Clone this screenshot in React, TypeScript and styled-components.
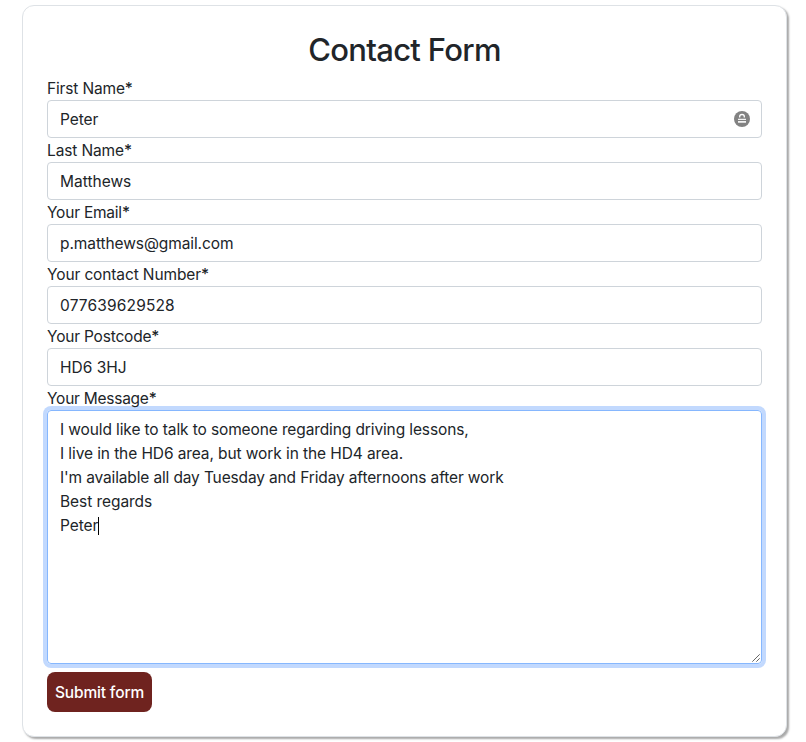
import React from 'react';
import styled, { createGlobalStyle } from 'styled-components';

const GlobalStyle = createGlobalStyle`
  *, *::before, *::after { box-sizing: border-box; }
  body {
    margin: 0;
    background: #fff;
    color: #212529;
    font-family: Inter, 'Liberation Sans', sans-serif;
    font-size: 15.5px;
    line-height: 24px;
  }
`;

const Page = styled.main`
  padding: 5px 18px 5px 22px;
`;

const Card = styled.form`
  display: flex;
  flex-direction: column;
  width: 765px;
  height: 732px;
  padding: 24px;
  border: 1px solid #dee2e6;
  border-radius: 12px;
  background: #fff;
  box-shadow: 2px 2px 2px rgba(0, 0, 0, 0.34);
`;

const Title = styled.h2`
  height: 46px;
  margin: 0;
  font-size: 31px;
  font-weight: 500;
  line-height: 40px;
  letter-spacing: -0.7px;
  text-align: center;
`;

const Label = styled.label<{ $spacing: number }>`
  position: relative;
  z-index: 1;
  display: block;
  height: 24px;
  line-height: 26px;
  letter-spacing: ${(p) => p.$spacing}px;
  white-space: nowrap;
`;

const Required = styled.span`
  font-weight: 500;
`;

const InputFrame = styled.div`
  display: flex;
  align-items: center;
  height: 38px;
  padding: 0 11px 0 12px;
  border: 1px solid #ced4da;
  border-radius: 4px;
`;

const Input = styled.input<{ $spacing: number }>`
  flex: 1;
  min-width: 0;
  height: 26px;
  padding: 1px 0 0;
  border: 0;
  outline: 0;
  background: transparent;
  color: inherit;
  font: inherit;
  letter-spacing: ${(p) => p.$spacing}px;
`;

const MessageBox = styled.div`
  position: relative;
  height: 254px;
  padding: 7px 12px;
  border: 1px solid #86b7fe;
  border-radius: 4px;
  box-shadow: 0 0 0 4px #c2d9fe;
`;

const MessageLine = styled.div<{ $spacing: number }>`
  display: flex;
  align-items: center;
  height: 24px;
  letter-spacing: ${(p) => p.$spacing}px;
  white-space: nowrap;
`;

const Caret = styled.span`
  width: 1px;
  height: 18px;
  background: #000;
`;

const ResizeGrip = styled.svg`
  position: absolute;
  right: 1px;
  bottom: 1px;
`;

const SubmitButton = styled.button`
  width: 105px;
  height: 40px;
  margin-top: 8px;
  padding: 2px 0 0;
  border: 0;
  border-radius: 8px;
  background: #6f231f;
  color: #fff;
  font: inherit;
  font-weight: 500;
  letter-spacing: -0.15px;
  white-space: nowrap;
`;

const LockBadge = () => (
  <svg width="16" height="16" viewBox="0 0 16 16" aria-hidden="true">
    <circle cx="8" cy="8" r="8" fill="#828282" />
    <path d="M5.7 6.6V5.6a2.3 2.1 0 0 1 4.6 0v1" fill="none" stroke="#fff" strokeWidth="1.3" />
    <path d="M4 7.8h8v1.3H4zM4 10h8v1.8H4z" fill="#fff" fillOpacity="0.9" />
  </svg>
);

const fields = [
  { id: 'first', label: 'First Name', ls: -0.15, value: 'Peter', vs: -0.07, lock: true },
  { id: 'last', label: 'Last Name', ls: -0.13, value: 'Matthews', vs: 0 },
  { id: 'email', label: 'Your Email', ls: -0.22, value: 'p.matthews@gmail.com', vs: -0.09 },
  { id: 'phone', label: 'Your contact Number', ls: -0.12, value: '077639629528', vs: 0.15 },
  { id: 'postcode', label: 'Your Postcode', ls: -0.2, value: 'HD6 3HJ', vs: 0 },
];

const message = [
  { text: 'I would like to talk to someone regarding driving lessons,', spacing: -0.116 },
  { text: 'I live in the HD6 area, but work in the HD4 area.', spacing: -0.096 },
  { text: "I'm available all day Tuesday and Friday afternoons after work", spacing: -0.142 },
  { text: 'Best regards', spacing: -0.06 },
  { text: 'Peter', spacing: -0.07 },
];

export default function App() {
  return (
    <>
      <GlobalStyle />
      <Page>
        <Card>
          <Title>Contact Form</Title>
          {fields.map((f) => (
            <React.Fragment key={f.id}>
              <Label htmlFor={f.id} $spacing={f.ls}>
                {f.label}
                <Required>*</Required>
              </Label>
              <InputFrame>
                <Input id={f.id} defaultValue={f.value} $spacing={f.vs} spellCheck={false} />
                {f.lock && <LockBadge />}
              </InputFrame>
            </React.Fragment>
          ))}
          <Label as="div" $spacing={-0.25}>
            Your Message
            <Required>*</Required>
          </Label>
          <MessageBox role="textbox" aria-multiline="true" aria-label="Your Message">
            {message.map((line, i) => (
              <MessageLine key={line.text} $spacing={line.spacing}>
                {line.text}
                {i === message.length - 1 && <Caret />}
              </MessageLine>
            ))}
            <ResizeGrip width="8" height="8" viewBox="0 0 8 8" aria-hidden="true">
              <path d="M0.3 7.7L7.7 0.3M4.3 7.7L7.7 4.3" stroke="#555" strokeWidth="0.9" fill="none" />
            </ResizeGrip>
          </MessageBox>
          <SubmitButton type="button">Submit form</SubmitButton>
        </Card>
      </Page>
    </>
  );
}
